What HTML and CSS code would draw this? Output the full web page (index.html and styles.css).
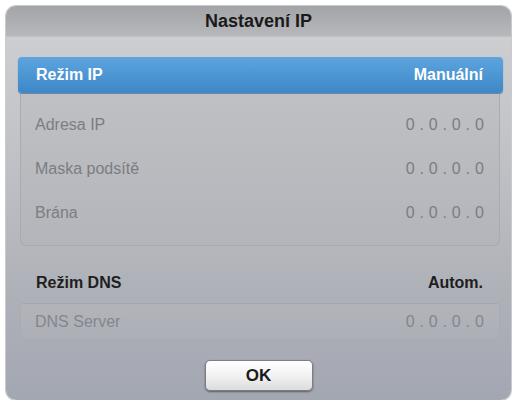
FILE: index.html
```html
<!DOCTYPE html>
<html lang="cs">
<head>
    <meta charset="UTF-8">
    <meta name="viewport" content="width=device-width, initial-scale=1.0">
    <title>Nastavení IP</title>
    <link rel="stylesheet" href="styles.css">
</head>
<body>
    <div class="dialog">
        <div class="dialog-title">Nastavení IP</div>

        <div class="dialog-body">
            <div class="mode-row selected">
                <span>Režim IP</span>
                <span>Manuální</span>
            </div>

            <div class="field-group">
                <div class="field-row">
                    <span>Adresa IP</span>
                    <span class="ip">0 . 0 . 0 . 0</span>
                </div>
                <div class="field-row">
                    <span>Maska podsítě</span>
                    <span class="ip">0 . 0 . 0 . 0</span>
                </div>
                <div class="field-row">
                    <span>Brána</span>
                    <span class="ip">0 . 0 . 0 . 0</span>
                </div>
            </div>

            <div class="mode-row">
                <span>Režim DNS</span>
                <span>Autom.</span>
            </div>

            <div class="field-group dns">
                <div class="field-row">
                    <span>DNS Server</span>
                    <span class="ip">0 . 0 . 0 . 0</span>
                </div>
            </div>

            <div class="actions">
                <button class="ok-btn">OK</button>
            </div>
        </div>
    </div>
</body>
</html>
```

FILE: styles.css
```css
body {
    margin: 0;
    background: #fff;
    font-family: 'Liberation Sans', Arial, sans-serif;
}

.dialog {
    margin: 6px 0 0 6px;
    width: 505px;
    height: 394px;
    border-radius: 10px;
    overflow: hidden;
    background: linear-gradient(#d0d1d3 0%, #c2c3c7 35%, #b0b2b9 70%, #a3a7b2 100%);
    box-shadow: 0 0 0 1px #c9cacd;
    display: flex;
    flex-direction: column;
}

.dialog-title {
    height: 31px;
    line-height: 31px;
    text-align: center;
    font-size: 18px;
    font-weight: bold;
    color: #1a1a1a;
    background: linear-gradient(#a3a4a7, #b7b8bb);
    border-bottom: 1px solid #c0c1c4;
    box-sizing: border-box;
}

.dialog-body {
    display: flex;
    flex-direction: column;
    padding: 20px 8px 0 12px;
}

.mode-row {
    display: flex;
    justify-content: space-between;
    align-items: center;
    height: 36px;
    padding: 0 20px 0 18px;
    font-size: 16px;
    font-weight: bold;
    color: #1e1e1e;
    margin-top: 19px;
}

.mode-row.selected {
    margin-top: 0;
    color: #fff;
    border-radius: 4px;
    background: linear-gradient(#5ea5de, #4c96d4 50%, #3f88c7);
    box-shadow: 0 1px 1px rgba(40, 80, 130, 0.6);
}

.field-group {
    margin: 1px 3px 0 2px;
    padding: 9px 0 10px;
    border: 1px solid #a9abb0;
    border-top: none;
    border-radius: 0 0 6px 6px;
    background: linear-gradient(#bfc0c3, #b3b5bb);
}

.field-group.dns {
    margin-top: 2px;
    padding: 0;
    border-top: 1px solid #a5a7ad;
    border-radius: 4px;
    background: linear-gradient(#b2b4ba, #adafb7);
}

.field-row {
    display: flex;
    justify-content: space-between;
    align-items: center;
    height: 44px;
    padding: 0 15px 0 14px;
    font-size: 16px;
    color: #7b7d82;
}

.dns .field-row {
    height: 35px;
    color: #84868c;
}

.ip {
    white-space: pre;
    letter-spacing: 0.2px;
}

.actions {
    display: flex;
    justify-content: center;
    margin-top: 20px;
    padding-right: 4px;
}

.ok-btn {
    width: 108px;
    height: 31px;
    border: 1px solid #7c7e84;
    border-radius: 5px;
    background: linear-gradient(#ffffff, #f2f2f2 50%, #dcdcde);
    box-shadow: 0 1px 2px rgba(0, 0, 0, 0.45);
    font-family: 'Liberation Sans', Arial, sans-serif;
    font-size: 17px;
    font-weight: bold;
    color: #1a1a1a;
    cursor: pointer;
}
```
